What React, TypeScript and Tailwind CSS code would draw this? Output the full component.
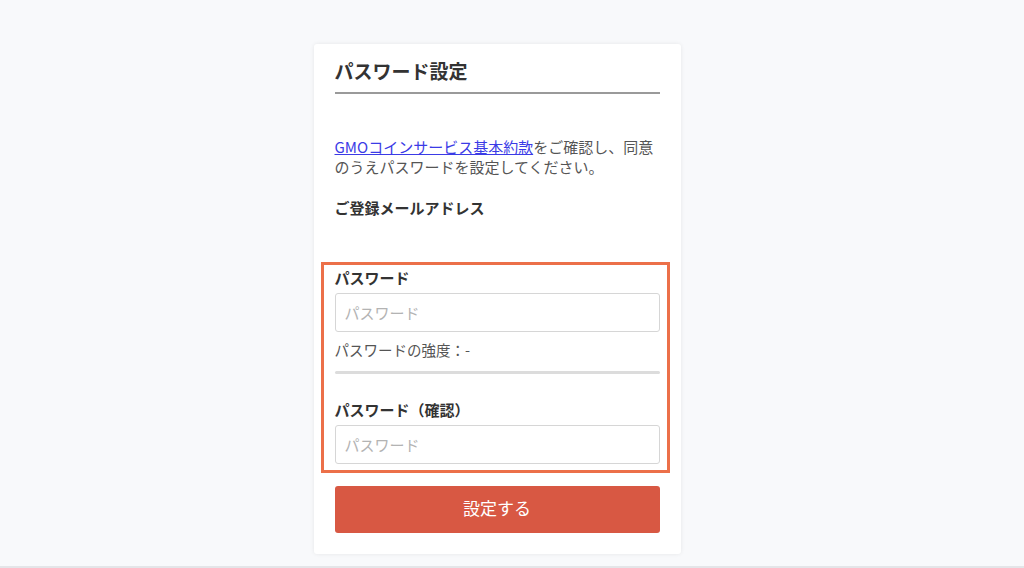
import React from "react";

const font = { fontFamily: '"Noto Sans CJK JP", "Noto Sans", sans-serif' };

function Field({ label, placeholder }: { label: string; placeholder: string }) {
  return (
    <div className="flex flex-col">
      <label className="text-[15px] leading-[20px] font-bold text-[#333]">{label}</label>
      <input
        type="password"
        placeholder={placeholder}
        className="mt-[5px] h-[39px] w-full rounded-[3px] border border-[#d6d6d6] bg-white px-[9px] text-[15px] text-[#333] placeholder:text-[#b3b3b3] outline-none"
        style={font}
      />
    </div>
  );
}

export default function App() {
  return (
    <div className="flex h-[568px] flex-col bg-[#f8f9fb]" style={font}>
      <main className="flex flex-1 justify-center pt-[44px] pr-[30px]">
        <div className="flex h-[510px] w-[367px] flex-col rounded-[3px] bg-white px-[21px] pt-[14px] shadow-[0_0_4px_rgba(0,0,0,0.08)]">
          <h1 className="border-b-2 border-[#9a9a9a] pb-[8px] text-[19px] leading-[26px] font-bold text-[#333]">
            パスワード設定
          </h1>

          <p className="mt-[43px] whitespace-nowrap text-[15px] leading-[20px] text-[#555]">
            <a href="#" className="text-[#3b3be6] underline">
              GMOコインサービス基本約款
            </a>
            をご確認し、同意
            <br />
            のうえパスワードを設定してください。
          </p>

          <p className="mt-[21px] text-[15px] leading-[20px] font-bold text-[#333]">
            ご登録メールアドレス
          </p>

          {/* Password section (highlighted) */}
          <div className="mt-[44px] -ml-[14px] -mr-[10px] border-[3px] border-[#ec7049] pl-[11px] pr-[7px] pt-[3px] pb-[6px]">
            <Field label="パスワード" placeholder="パスワード" />
            <p className="mt-[8px] text-[14.5px] leading-[20px] text-[#555]">パスワードの強度：-</p>
            <div className="mt-[11px] h-[3px] rounded-full bg-[#dcdcdc]" />
            <div className="mt-[26px]">
              <Field label="パスワード（確認）" placeholder="パスワード" />
            </div>
          </div>

          <button
            type="button"
            className="mt-[13px] h-[47px] w-full rounded-[3px] bg-[#d85843] pb-[4px] text-[17px] text-white"
            style={font}
          >
            設定する
          </button>
        </div>
      </main>
      <div className="h-[2px] bg-[#e4e5e8]" />
    </div>
  );
}
